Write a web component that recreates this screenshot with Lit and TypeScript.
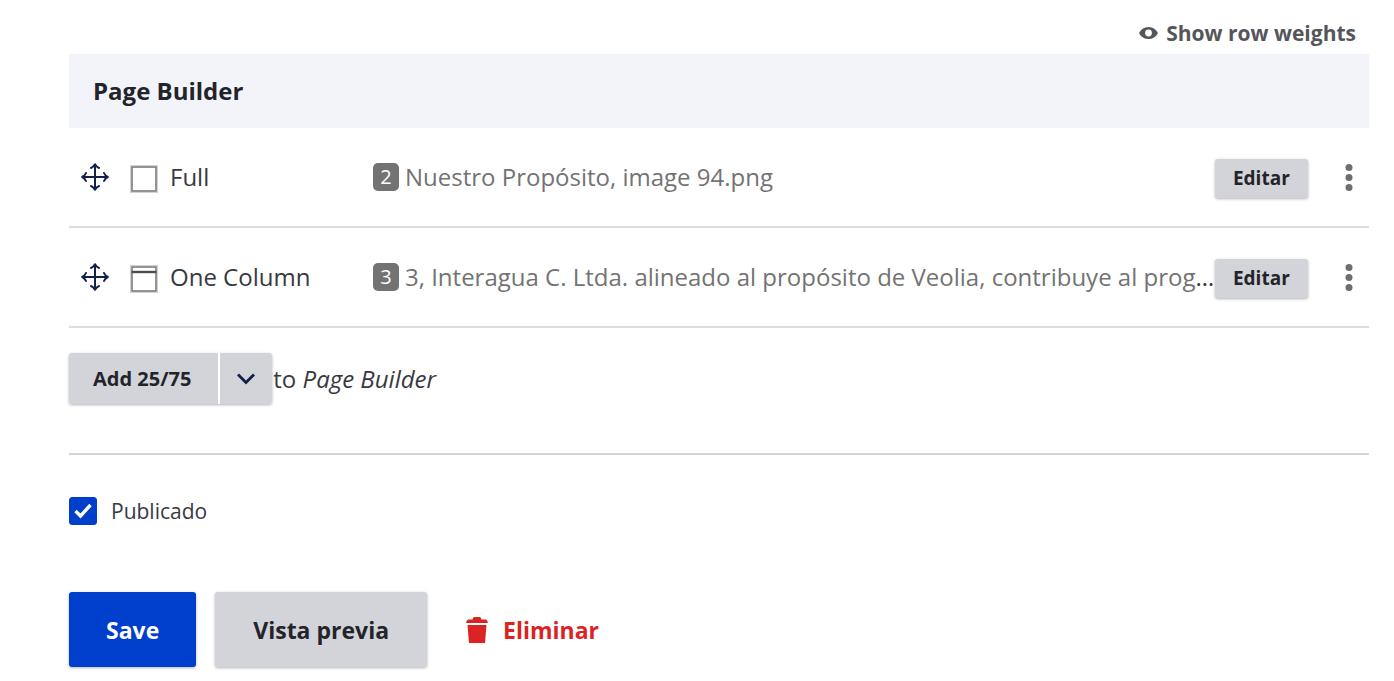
import { LitElement, html, css, svg } from "lit";
import { customElement, property, state } from "lit/decorators.js";

interface Paragraph {
  name: string;
  icon: "full" | "one-column";
  count: number;
  summary: string;
  truncated: boolean;
}

const PARAGRAPHS: Paragraph[] = [
  { name: "Full", icon: "full", count: 2, summary: "Nuestro Propósito, image 94.png", truncated: false },
  {
    name: "One Column",
    icon: "one-column",
    count: 3,
    summary: "3, Interagua C. Ltda. alineado al propósito de Veolia, contribuye al prog",
    truncated: true,
  },
];

@customElement("paragraph-table")
export class ParagraphTable extends LitElement {
  @property({ attribute: false }) rows: Paragraph[] = [];
  @property() heading = "";

  static styles = css`
    :host {
      display: block;
    }
    .table {
      width: 100%;
      border-collapse: collapse;
      table-layout: fixed;
    }
    .col-drag {
      width: 61px;
    }
    .col-type {
      width: 243px;
    }
    .col-actions {
      width: 154px;
    }
    .head {
      height: 74px;
      padding: 0 24px;
      background: #f3f4f9;
      color: #232429;
      font-size: 24px;
      font-weight: 700;
      text-align: left;
    }
    .cell {
      height: 98px;
      padding: 0;
      border-bottom: 2px solid #dcdde1;
      white-space: nowrap;
      vertical-align: middle;
    }
    .drag {
      display: block;
      padding: 0 12px;
      color: #13204a;
      text-decoration: none;
    }
    .drag-icon,
    .more-icon {
      display: block;
    }
    .type {
      display: flex;
      align-items: center;
      gap: 12px;
    }
    .type-icon {
      margin-top: 4px;
    }
    .summary {
      display: flex;
      align-items: center;
      gap: 6px;
    }
    .badge {
      flex: none;
      width: 26px;
      border-radius: 5px;
      background: #737373;
      color: #fff;
      font-size: 20px;
      line-height: 28px;
      text-align: center;
    }
    .text {
      overflow: hidden;
    }
    .excerpt {
      color: #737373;
    }
    .actions {
      display: flex;
      align-items: center;
      justify-content: space-between;
      padding: 2px 10px 0 0;
    }
    .edit {
      height: 39px;
      padding: 0 18px;
      border: 0;
      border-radius: 3px;
      background: #d3d4d9;
      box-shadow: 0 1px 3px rgb(0 0 0 / 30%);
      color: #232429;
      font: 700 19px/26px "Open Sans", "Noto Sans", sans-serif;
    }
    .more {
      padding: 0;
      border: 0;
      background: none;
      color: #6e6e6e;
    }
  `;

  private typeIcon(kind: Paragraph["icon"]) {
    return html`<svg class="type-icon" width="28" height="28" viewBox="0 0 28 28" aria-hidden="true">
      <rect x="1.5" y="1.5" width="25" height="25" fill="#fff" stroke="#d2d2d2" stroke-width="3" />
      <rect x="2" y="2" width="24" height="24" fill="none" stroke="#858585" stroke-width="1.6" />
      ${kind === "one-column"
        ? svg`<path d="M1.5 7h25" stroke="#4c4c4c" stroke-width="2.4" />`
        : null}
    </svg>`;
  }

  render() {
    return html`<table class="table">
      <colgroup>
        <col class="col-drag" />
        <col class="col-type" />
        <col />
        <col class="col-actions" />
      </colgroup>
      <thead>
        <tr>
          <th class="head" colspan="4" scope="colgroup">${this.heading}</th>
        </tr>
      </thead>
      <tbody>
        ${this.rows.map(
          (row) => html`<tr>
            <td class="cell">
              <a class="drag" href="#">
                <svg class="drag-icon" width="28" height="28" viewBox="0 0 28 28" fill="none" stroke="currentColor" stroke-width="2" stroke-linecap="round" stroke-linejoin="round">
                  <path d="M14 1.500v25M1.500 14h25M10 5Q12.500 4 14 1.200 15.500 4 18 5M10 23q2.500 1 4 3.800 1.500-2.800 4-3.800M5 10Q4 12.500 1.200 14 4 15.500 5 18M23 10q1 2.500 3.800 4-2.800 1.500-3.800 4" />
                </svg>
              </a>
            </td>
            <td class="cell"><div class="type">${this.typeIcon(row.icon)}${row.name}</div></td>
            <td class="cell">
              <div class="summary">
                <span class="badge">${row.count}</span>
                <span class="text"><span class="excerpt">${row.summary}</span>${row.truncated ? "…" : ""}</span>
              </div>
            </td>
            <td class="cell">
              <div class="actions">
                <button class="edit" type="button">Editar</button>
                <button class="more" type="button">
                  <svg class="more-icon" width="20" height="30" viewBox="0 0 20 30" fill="currentColor">
                    <circle cx="10" cy="4.5" r="3.5" />
                    <circle cx="10" cy="14.5" r="3.5" />
                    <circle cx="10" cy="24.5" r="3.5" />
                  </svg>
                </button>
              </div>
            </td>
          </tr>`,
        )}
      </tbody>
    </table>`;
  }
}

@customElement("app-root")
export class AppRoot extends LitElement {
  @state() private published = true;

  static styles = css`
    :host {
      display: block;
      padding: 16px 25px 12px 69px;
      background: #fff;
      color: #38393f;
      font: 24px/34px "Open Sans", "Noto Sans", sans-serif;
    }
    .toolbar {
      display: flex;
      justify-content: flex-end;
      padding: 0 13px 4px 0;
    }
    .weights {
      display: flex;
      align-items: center;
      gap: 8px;
      padding: 0;
      border: 0;
      background: none;
      color: #55565b;
      font: 700 21px/34px "Open Sans", "Noto Sans", sans-serif;
    }
    .add {
      display: flex;
      align-items: center;
      padding: 25px 0 49px;
      border-bottom: 2px solid #d3d4d9;
      font-size: 24px;
    }
    .split {
      display: flex;
      gap: 2px;
      border-radius: 3px;
      box-shadow: 0 1px 3px rgb(0 0 0 / 30%);
      background: #fff;
      margin-right: 1px;
    }
    .add-button,
    .toggle {
      height: 51px;
      border: 0;
      background: #d3d4d9;
      color: #232429;
      font: 700 20px/26px "Open Sans", "Noto Sans", sans-serif;
    }
    .add-button {
      padding: 0 27px 0 24px;
      border-radius: 3px 0 0 3px;
    }
    .toggle {
      display: grid;
      place-items: center;
      width: 52px;
      padding: 0;
      border-radius: 0 3px 3px 0;
    }
    .published {
      display: flex;
      align-items: center;
      gap: 14px;
      width: max-content;
      padding: 39px 0 64px;
      font-size: 21px;
    }
    .check {
      appearance: none;
      width: 28px;
      height: 28px;
      margin: 0;
      border: 1px solid #003ecc;
      border-radius: 3px;
      background: #fff;
    }
    .check:checked {
      background: #003ecc
        url('data:image/svg+xml,<svg xmlns="http://www.w3.org/2000/svg" viewBox="0 0 26 26"><path d="M5.500 13l5 5L20.500 7" fill="none" stroke="white" stroke-width="3.400"/></svg>')
        center / 26px 26px no-repeat;
    }
    .actions {
      display: flex;
      align-items: center;
      gap: 19px;
    }
    .button {
      height: 75px;
      border: 0;
      border-radius: 3px;
      padding: 0 38px;
      background: #d3d4d9;
      box-shadow: 0 1px 3px rgb(0 0 0 / 30%);
      color: #232429;
      font: 700 23px/34px "Open Sans", "Noto Sans", sans-serif;
    }
    .primary {
      padding: 0 37px;
      background: #003ecc;
      color: #fff;
    }
    .delete {
      display: flex;
      align-items: center;
      gap: 15px;
      padding-left: 20px;
      color: #dc2323;
      font-size: 23px;
      font-weight: 700;
      text-decoration: none;
    }
  `;

  render() {
    return html`
      <div class="toolbar">
        <button class="weights" type="button">
          <svg width="19" height="14" viewBox="0 0 19 14" aria-hidden="true">
            <path fill="currentColor" fill-rule="evenodd" d="M0 7C2 3 5.400 1 9.500 1S17 3 19 7c-2 4-5.400 6-9.500 6S2 11 0 7zM9.500 3.600a3.400 3.400 0 1 0 0 6.800 3.400 3.400 0 0 0 0-6.800z" />
          </svg>
          Show row weights
        </button>
      </div>
      <paragraph-table heading="Page Builder" .rows=${PARAGRAPHS}></paragraph-table>
      <div class="add">
        <div class="split">
          <button class="add-button" type="button">Add 25/75</button>
          <button class="toggle" type="button">
            <svg width="20" height="14" viewBox="0 0 20 14" fill="none" stroke="#13204a" stroke-width="2.800">
              <path d="M2 2.500l8 8 8-8" />
            </svg>
          </button>
        </div>
        <span>to <em>Page Builder</em></span>
      </div>
      <label class="published">
        <input
          class="check"
          type="checkbox"
          .checked=${this.published}
          @change=${(e: Event) => (this.published = (e.target as HTMLInputElement).checked)}
        />
        Publicado
      </label>
      <div class="actions">
        <button class="button primary" type="submit">Save</button>
        <button class="button" type="button">Vista previa</button>
        <a class="delete" href="#">
          <svg width="22" height="26" viewBox="0 0 22 26" fill="currentColor" aria-hidden="true">
            <path d="M7 1q.500-1 1.500-1h5q1 0 1.500 1l.500 1.500H20q1.500.500 2 3.500H0q.500-3 2-3.500h4.500zM1.500 8h19L19 26H3z" />
          </svg>
          Eliminar
        </a>
      </div>
    `;
  }
}
